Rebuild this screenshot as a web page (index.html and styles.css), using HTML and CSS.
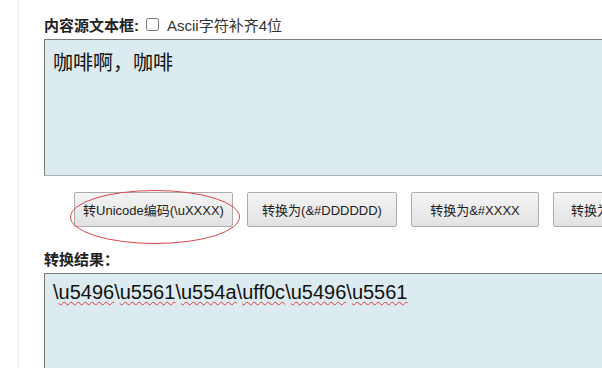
FILE: index.html
```html
<!DOCTYPE html>
<html lang="zh">
<head>
<meta charset="utf-8">
<link rel="stylesheet" href="styles.css">
</head>
<body>
<div class="page">
  <div class="field-row">
    <span class="label">内容源文本框:</span>
    <input type="checkbox" class="check" id="pad">
    <label for="pad" class="check-label">Ascii字符补齐4位</label>
  </div>
  <div class="box box-source">咖啡啊，咖啡</div>
  <div class="buttons">
    <div class="btn-wrap">
      <button class="btn btn-unicode">转Unicode编码(\uXXXX)</button>
      <svg class="circle" width="172" height="58" viewBox="0 0 172 58"><ellipse cx="86" cy="29" rx="84.5" ry="26.5" fill="none" stroke="#d9474a" stroke-width="1"/></svg>
    </div>
    <button class="btn btn-dec">转换为(&amp;#DDDDDD)</button>
    <button class="btn btn-hex">转换为&amp;#XXXX</button>
    <button class="btn btn-more">转换为中文</button>
  </div>
  <div class="field-row result-row">
    <span class="label">转换结果：</span>
  </div>
  <div class="box box-result">\<span class="sp">u5496</span>\<span class="sp">u5561</span>\<span class="sp">u554a</span>\<span class="sp">uff0c</span>\<span class="sp">u5496</span>\<span class="sp">u5561</span></div>
</div>
</body>
</html>
```

FILE: styles.css
```css
html, body {
  margin: 0;
  padding: 0;
  background: #fff;
  overflow: hidden;
  width: 602px;
  height: 368px;
}
.page {
  margin-left: 18px;
  border-left: 1px solid #ececec;
  padding: 14px 0 0 25px;
  height: 354px;
  font-family: "Liberation Sans", "Noto Sans CJK SC", sans-serif;
  color: #222;
  overflow: hidden;
}
.field-row {
  display: flex;
  align-items: center;
  height: 20px;
  margin-bottom: 5px;
  white-space: nowrap;
}
.label {
  font-weight: bold;
  font-size: 15px;
  color: #222;
}
.check {
  margin: 0 8px 0 7px;
  width: 13px;
  height: 13px;
}
.check-label {
  font-size: 15px;
  color: #333;
}
.box {
  width: 600px;
  box-sizing: border-box;
  background: #dcebef;
  border: 1px solid #a9b3b6;
  border-top-color: #7c7c7c;
  border-left-color: #7c7c7c;
  border-right: none;
  padding: 0 8px;
  font-size: 20px;
  line-height: 24px;
  color: #111;
  white-space: nowrap;
}
.box-source {
  height: 137px;
  padding-top: 10px;
  font-family: "Noto Sans CJK SC", sans-serif;
}
.box-result {
  height: 95px;
  border-bottom: none;
  padding-top: 6px;
  font-family: "Liberation Sans", sans-serif;
}
.sp {
  text-decoration: underline wavy #e0393c;
  text-decoration-thickness: 1px;
  text-underline-offset: 2px;
}
.buttons {
  display: flex;
  gap: 14px;
  margin: 16px 0 0 30px;
  height: 35px;
}
.btn-wrap {
  position: relative;
  display: flex;
}
.btn {
  height: 35px;
  box-sizing: border-box;
  border: 1px solid #acacac;
  border-radius: 2px;
  background: linear-gradient(#f4f4f4, #e2e2e2);
  font-family: "Liberation Sans", "Noto Sans CJK SC", sans-serif;
  font-size: 13px;
  color: #222;
  padding: 0;
  flex: none;
  white-space: nowrap;
  overflow: hidden;
}
.btn-unicode { width: 159px; }
.btn-dec { width: 150px; }
.btn-hex { width: 128px; }
.btn-more { width: 130px; text-align: left; padding-left: 17px; }
.circle {
  position: absolute;
  left: -5px;
  top: -4px;
  pointer-events: none;
}
.result-row {
  margin-top: 21px;
}
```
